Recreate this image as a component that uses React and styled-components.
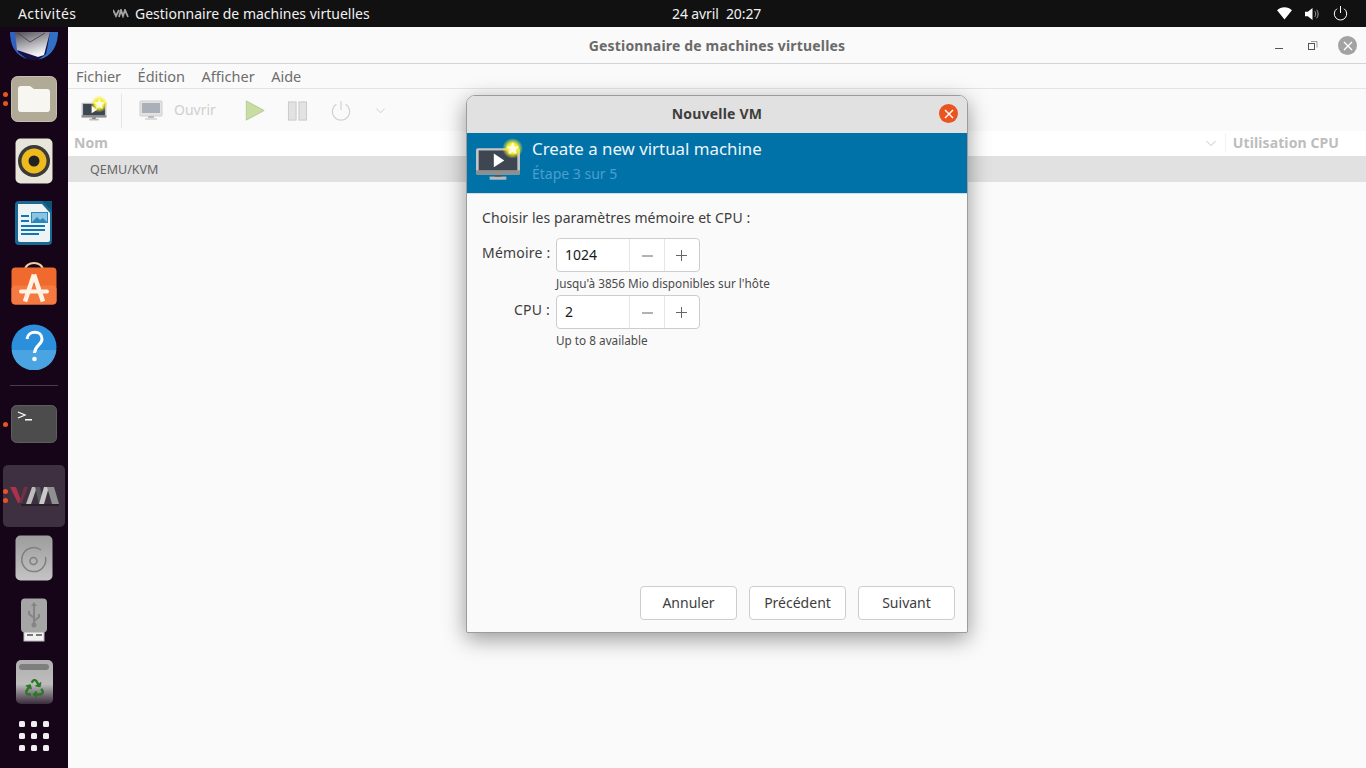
import React from "react";
import styled, { createGlobalStyle } from "styled-components";
import { FaRecycle } from "react-icons/fa";

const Global = createGlobalStyle`
  html, body { margin: 0; padding: 0; height: 100%; overflow: hidden; }
  body { font-family: "Noto Sans", "Open Sans", sans-serif; background: #fafafa; }
  * { box-sizing: border-box; }
`;

function VmStar({ size = 44, id, cx = 36, cy = 8, scale = 1.1 }) {
  return (
    <svg width={size} height={size} viewBox="0 0 44 44" style={{ overflow: "visible" }}>
      <defs>
        <radialGradient id={id}>
          <stop offset="0.5" stopColor="#f4ee2e" />
          <stop offset="1" stopColor="#f4ee2e" stopOpacity="0" />
        </radialGradient>
      </defs>
      <rect x="14" y="35" width="16" height="3" fill="#b9b9b9" />
      <rect x="19" y="32" width="6" height="3" fill="#555" />
      <rect x="1" y="8" width="42" height="25" rx="1.5" fill="#c6c6c6" />
      <rect x="1" y="29" width="42" height="4" fill="#8f8f8f" />
      <rect x="3.5" y="10" width="37" height="19" fill="#3e4652" />
      <path d="M18 13 L28 19.5 L18 26 Z" fill="#fff" />
      <g transform={`translate(${cx} ${cy}) scale(${scale}) translate(-36 -8)`}>
        <circle cx="36" cy="8" r="9" fill={`url(#${id})`} />
        <path d="M36 2.500l1.700 3.600 3.900.5-2.900 2.700.8 3.900-3.500-2-3.500 2 .8-3.900-2.900-2.700 3.900-.5z" fill="#fffbe0" />
      </g>
    </svg>
  );
}

function Monitor() {
  return (
    <svg width="24" height="22" viewBox="0 0 24 22">
      <rect x="1" y="1" width="22" height="15" rx="1" fill="#e2e2e2" stroke="#cfcfcf" />
      <rect x="3" y="3" width="18" height="10" fill="#a9b0b8" />
      <rect x="9" y="16" width="6" height="2" fill="#bdbdbd" />
      <rect x="6" y="18" width="12" height="2" fill="#dcdcdc" />
    </svg>
  );
}

function Chevron({ color = "#c9c9c9", size = 12 }) {
  return (
    <svg width={size} height={size} viewBox="0 0 12 12" fill="none">
      <path d="M1.500 4l4.500 4.500L10.500 4" stroke={color} strokeWidth="1" />
    </svg>
  );
}

function MailIcon() {
  return (
    <svg width="48" height="48" viewBox="0 0 48 48">
      <defs>
        <clipPath id="mailClip">
          <path d="M0 19h48v4A24 24 0 0 1 0 23z" />
        </clipPath>
        <linearGradient id="envFill" x1="0" y1="0" x2="0.4" y2="1">
          <stop offset="0" stopColor="#4f4b55" />
          <stop offset="0.6" stopColor="#b5b3ba" />
          <stop offset="1" stopColor="#f5f5f7" />
        </linearGradient>
      </defs>
      <g clipPath="url(#mailClip)">
        <rect x="0" y="19" width="48" height="29" fill="#181244" />
        <path d="M0 19h6l2 20 10 8C8 46 0 34 0 19z" fill="#2f62c0" />
        <path d="M40 19h8c0 14-8 27-20 28l8-6 2-10z" fill="#3270c6" />
        <path d="M5 19h35l-6 23-6 2-21-7z" fill="url(#envFill)" />
        <path d="M8 20l12 9 15-9" fill="none" stroke="#3f3c44" strokeWidth="0.800" />
      </g>
    </svg>
  );
}

function FilesIcon() {
  return (
    <svg width="46" height="46" viewBox="0 0 46 46">
      <rect x="0.500" y="0.500" width="45" height="45" rx="6" fill="#b0aa97" stroke="#c4bfaf" />
      <path d="M7 13a3 3 0 0 1 3-3h9l4 3h13a3 3 0 0 1 3 3v17a3 3 0 0 1-3 3H10a3 3 0 0 1-3-3z" fill="#f8f6f1" />
    </svg>
  );
}

function RhythmIcon() {
  return (
    <svg width="38" height="46" viewBox="0 0 38 46">
      <rect x="0.500" y="0.500" width="37" height="45" rx="5" fill="#e8e5da" />
      <circle cx="19" cy="23" r="16" fill="#3a3a3a" />
      <circle cx="19" cy="23" r="12.500" fill="#edbb1e" />
      <circle cx="19" cy="23" r="5.500" fill="#222" />
    </svg>
  );
}

function WriterIcon() {
  return (
    <svg width="38" height="46" viewBox="0 0 38 46">
      <path d="M4 1h24l9 9v31a4 4 0 0 1-4 4H4a4 4 0 0 1-4-4V5a4 4 0 0 1 4-4z" fill="#186a94" />
      <path d="M3 4h24l8 9v27a2 2 0 0 1-2 2H5a2 2 0 0 1-2-2z" fill="#eef3f6" />
      <path d="M27 1l10 10V1z" fill="#0d5579" />
      <g fill="#0f78b4">
        <rect x="6" y="15" width="8" height="2" />
        <rect x="6" y="20" width="8" height="2" />
        <rect x="6" y="25" width="24" height="2" />
        <rect x="6" y="29" width="24" height="2" />
        <rect x="6" y="33" width="18" height="2" />
      </g>
      <rect x="16.500" y="12.500" width="16" height="10" fill="#8ec3e0" stroke="#2a88bd" />
      <path d="M17 22l5-5 3 3 3-2 4 4z" fill="#2a88bd" />
    </svg>
  );
}

function SoftwareIcon() {
  return (
    <svg width="46" height="44" viewBox="0 1.500 46 44" style={{ overflow: "visible" }}>
      <path d="M14 9c0-10 18-10 18 0" fill="none" stroke="#f0cfa0" strokeWidth="2" />
      <rect x="0.500" y="6" width="45" height="37" rx="4" fill="#f0692d" />
      <rect x="0.500" y="24" width="45" height="19" rx="4" fill="#f47a42" />
      <path d="M23 13L14 40M23 13l9 27" stroke="#fff3e6" strokeWidth="4.500" fill="none" />
      <rect x="8" y="28" width="30" height="4" rx="2" fill="#fff3e6" />
    </svg>
  );
}

function HelpIcon() {
  return (
    <svg width="46" height="46" viewBox="0 0 46 46">
      <circle cx="23" cy="23" r="22.500" fill="#2b8fdb" />
      <path d="M.6 26h44.800A22.500 22.500 0 0 1 .6 26z" fill="#4ba4e2" />
      <path d="M16 15c1-9 15-9 15 0 0 6-7 6-7.500 14" fill="none" stroke="#fff" strokeWidth="3" />
      <circle cx="23.500" cy="35" r="2.300" fill="#fff" />
    </svg>
  );
}

function TerminalIcon() {
  return (
    <svg width="46" height="38" viewBox="0 0 46 38">
      <rect x="0.500" y="0.500" width="45" height="37" rx="5" fill="#4c4c4c" stroke="#5e5e5e" />
      <path d="M7 7l7 3-7 3" fill="none" stroke="#fff" strokeWidth="1.300" />
      <rect x="14" y="14" width="7" height="1.500" fill="#fff" />
    </svg>
  );
}

function VmmDockLogo() {
  return (
    <svg width="50" height="20" viewBox="0 0 50 20">
      <path d="M12 19h38" stroke="#1e1e1e" strokeWidth="1.600" />
      <path d="M1 1h6l6 16H9z" fill="#a8334d" />
      <path d="M15 1h4l-6 16h-3z" fill="#6d3345" />
      <path d="M17 18h5l6-17h-5z" fill="#bcbcbc" />
      <path d="M26 1h5l4 17h-5z" fill="#55585c" />
      <path d="M30 18h5l5-17h-5z" fill="#c9c9c9" />
      <path d="M38 1h7l5 17h-7z" fill="#8f9092" />
    </svg>
  );
}

function SmallVmm() {
  return (
    <svg width="16" height="9" viewBox="0 0 16 9" fill="none">
      <path d="M0 1l3 6 3-6M6 8l2-7 2 6 2-6 3 7" stroke="#a5a5a5" strokeWidth="1.800" />
    </svg>
  );
}

function DiscIcon() {
  return (
    <svg width="38" height="46" viewBox="0 0 38 46">
      <defs>
        <linearGradient id="discBg" x1="0" y1="0" x2="0" y2="1">
          <stop offset="0" stopColor="#9c9c9c" />
          <stop offset="1" stopColor="#c4c4c4" />
        </linearGradient>
      </defs>
      <rect x="0.500" y="0.500" width="37" height="45" rx="5" fill="url(#discBg)" />
      <path d="M26 15A12 12 0 1 0 30.500 22" fill="none" stroke="#7f7f7f" strokeWidth="1.500" />
      <circle cx="18.500" cy="26" r="3.500" fill="none" stroke="#7f7f7f" strokeWidth="1.500" />
    </svg>
  );
}

function UsbIcon() {
  return (
    <svg width="28" height="44" viewBox="0 0 28 44">
      <rect x="4" y="32" width="20" height="11" fill="#f1f1f1" stroke="#bbb" />
      <rect x="7" y="36" width="6" height="2" fill="#777" />
      <rect x="16" y="36" width="6" height="2" fill="#777" />
      <rect x="1" y="0.500" width="26" height="34" rx="4" fill="#a6a6a6" />
      <path d="M14 6v22M14 20l-5-4v-3M14 23l5-4v-3" fill="none" stroke="#858585" strokeWidth="2" />
      <path d="M14 4l-3 4h6z" fill="#858585" />
      <circle cx="14" cy="27" r="2.500" fill="#858585" />
    </svg>
  );
}

function TrashIcon() {
  return (
    <TrashBox>
      <TrashLid />
      <FaRecycle size={19} color="#2a7a22" />
    </TrashBox>
  );
}

function GridIcon() {
  return (
    <AppDots>
      {Array.from({ length: 9 }).map((_, i) => (
        <i key={i} />
      ))}
    </AppDots>
  );
}

const dockItems = [
  { id: "mail", icon: <MailIcon /> },
  { id: "files", icon: <FilesIcon />, dots: 2 },
  { id: "rhythm", icon: <RhythmIcon /> },
  { id: "writer", icon: <WriterIcon /> },
  { id: "software", icon: <SoftwareIcon /> },
  { id: "help", icon: <HelpIcon /> },
  { id: "sep" },
  { id: "term", icon: <TerminalIcon />, dots: 1 },
  { id: "vmm", icon: <VmmDockLogo />, dots: 2, active: true },
  { id: "disc", icon: <DiscIcon /> },
  { id: "usb", icon: <UsbIcon /> },
  { id: "trash", icon: <TrashIcon /> },
  { id: "grid", icon: <GridIcon /> },
];

function Spin({ value }) {
  return (
    <SpinBox>
      <SpinValue>{value}</SpinValue>
      <SpinBtn>
        <svg width="11" height="11" viewBox="0 0 11 11"><path d="M0 6h11" stroke="#666" /></svg>
      </SpinBtn>
      <SpinBtn>
        <svg width="11" height="11" viewBox="0 0 11 11"><path d="M0 5.500h11M5.500 0v11" stroke="#666" /></svg>
      </SpinBtn>
    </SpinBox>
  );
}

export default function App() {
  return (
    <Page>
      <Global />
      <TopBar>
        <TopLeft>
          <Activities>Activités</Activities>
          <AppName>
            <SmallVmm />
            <span>Gestionnaire de machines virtuelles</span>
          </AppName>
        </TopLeft>
        <Clock>24 avril&nbsp;&nbsp;20:27</Clock>
        <Tray>
          <svg width="15" height="13" viewBox="0 0 16 14"><path d="M0 3.500C4-.8 12-.8 16 3.500L8 13.500z" fill="#fff" /></svg>
          <svg width="15" height="14" viewBox="0 0 16 14" fill="none"><path d="M0 4.500h3L8 .5v13L3 9.500H0z" fill="#fff" /><path d="M10.500 4c1.200 1.800 1.200 4.200 0 6M12.500 2.500c2 2.600 2 6.400 0 9" stroke="#aaa" /></svg>
          <svg width="15" height="15" viewBox="0 0 15 15" fill="none"><path d="M4 2.700a6.200 6.200 0 1 0 7 0M7.500 0v7" stroke="#fff" /></svg>
        </Tray>
      </TopBar>
      <Body>
        <Dock>
          {dockItems.map((d) =>
            d.id === "sep" ? (
              <DockSep key={d.id} />
            ) : (
              <DockItem key={d.id} $active={d.active}>
                {d.dots ? (
                  <RunDots>
                    {Array.from({ length: d.dots }).map((_, i) => (
                      <b key={i} />
                    ))}
                  </RunDots>
                ) : null}
                {d.icon}
              </DockItem>
            )
          )}
        </Dock>
        <MainWindow>
          <TitleBar>
            <Title>Gestionnaire de machines virtuelles</Title>
            <WinBtns>
              <svg width="10" height="10" viewBox="0 0 10 10"><path d="M1 7.500h8" stroke="#555" /></svg>
              <svg width="10" height="10" viewBox="0 0 10 10" fill="none"><rect x="0.500" y="2.500" width="6" height="6" stroke="#555" /><path d="M3 .5h6v6" stroke="#999" /></svg>
              <GreyClose>
                <svg width="10" height="10" viewBox="0 0 10 10"><path d="M1 1l8 8M9 1L1 9" stroke="#fff" strokeWidth="1.300" /></svg>
              </GreyClose>
            </WinBtns>
          </TitleBar>
          <MenuBar>
            <MenuItem>Fichier</MenuItem>
            <MenuItem>Édition</MenuItem>
            <MenuItem>Afficher</MenuItem>
            <MenuItem>Aide</MenuItem>
          </MenuBar>
          <ToolBar>
            <NewVm><VmStar size={26} id="glowTool" cx={31} cy={10} scale={1.6} /></NewVm>
            <ToolSep />
            <OpenBtn>
              <Monitor />
              <span>Ouvrir</span>
            </OpenBtn>
            <svg width="22" height="23" viewBox="0 0 24 24"><path d="M2.500 1.500L22 12 2.500 22.500z" fill="#c8dca4" stroke="#b4c98d" /></svg>
            <svg width="21" height="22" viewBox="0 0 22 22"><rect x="1.500" y="1.500" width="8" height="19" fill="#e2e2e2" stroke="#c9c9c9" /><rect x="12.500" y="1.500" width="8" height="19" fill="#e2e2e2" stroke="#c9c9c9" /></svg>
            <ToolSlot $ml="2px">
              <svg width="20" height="22" viewBox="0 0 22 22" fill="none"><path d="M6 3.500a9.500 9.500 0 1 0 10 0M11 0v10" stroke="#d2d2d2" strokeWidth="1.300" /></svg>
            </ToolSlot>
            <ToolSlot $ml="3px"><Chevron size={11} /></ToolSlot>
          </ToolBar>
          <ListHead>
            <ColName>Nom</ColName>
            <Chevron color="#c4c4c4" />
            <ColCpu>Utilisation CPU</ColCpu>
          </ListHead>
          <ListRow>QEMU/KVM</ListRow>
        </MainWindow>
        <Dialog>
          <DialogTitle>
            <DialogName>Nouvelle VM</DialogName>
            <OrangeClose>
              <svg width="10" height="10" viewBox="0 0 10 10"><path d="M1 1l8 8M9 1L1 9" stroke="#fff" strokeWidth="1.400" /></svg>
            </OrangeClose>
          </DialogTitle>
          <Banner>
            <VmStar size={46} id="glowBanner" />
            <BannerText>
              <BannerHead>Create a new virtual machine</BannerHead>
              <BannerStep>Étape 3 sur 5</BannerStep>
            </BannerText>
          </Banner>
          <DialogBody>
            <Intro>Choisir les paramètres mémoire et CPU :</Intro>
            <Form>
              <FieldLabel>Mémoire :</FieldLabel>
              <FieldCell>
                <Spin value="1024" />
                <Hint>Jusqu'à 3856 Mio disponibles sur l'hôte</Hint>
              </FieldCell>
              <FieldLabel>CPU :</FieldLabel>
              <FieldCell>
                <Spin value="2" />
                <Hint>Up to 8 available</Hint>
              </FieldCell>
            </Form>
            <Actions>
              <ActionBtn>Annuler</ActionBtn>
              <ActionBtn>Précédent</ActionBtn>
              <ActionBtn>Suivant</ActionBtn>
            </Actions>
          </DialogBody>
        </Dialog>
      </Body>
    </Page>
  );
}

const Page = styled.div`
  width: 1366px;
  height: 768px;
  display: flex;
  flex-direction: column;
  overflow: hidden;
`;
const TopBar = styled.header`
  height: 27px;
  flex: none;
  background: #111;
  color: #f0f0f0;
  font-size: 14px;
  display: grid;
  grid-template-columns: 654px auto 1fr;
  align-items: center;
  padding-left: 18px;
`;
const TopLeft = styled.div`
  display: flex;
  align-items: center;
`;
const Activities = styled.span`
  width: 95px;
  letter-spacing: 0.4px;
`;
const AppName = styled.div`
  display: flex;
  align-items: center;
  gap: 6px;
`;
const Clock = styled.div`
  letter-spacing: -0.1px;
`;
const Tray = styled.div`
  justify-self: end;
  display: flex;
  align-items: center;
  gap: 13px;
  margin-right: 18px;
`;
const Body = styled.div`
  flex: 1;
  display: flex;
  position: relative;
  min-height: 0;
`;
const Dock = styled.nav`
  width: 68px;
  flex: none;
  background: #160518;
  display: flex;
  flex-direction: column;
  overflow: hidden;
`;
const DockItem = styled.div`
  position: relative;
  flex: none;
  height: 62px;
  width: 62px;
  margin-left: 3px;
  display: flex;
  align-items: center;
  justify-content: center;
  border-radius: 5px;
  background: ${(p) => (p.$active ? "#3e2f41" : "transparent")};
  margin-top: ${(p) => (p.$active ? "10px" : "0")};
  &:first-child { margin-top: -21px; }
`;
const RunDots = styled.div`
  position: absolute;
  left: 0;
  top: 0;
  bottom: 0;
  display: flex;
  flex-direction: column;
  justify-content: center;
  gap: 4px;
  b {
    display: block;
    width: 5px;
    height: 5px;
    border-radius: 50%;
    background: #e95420;
  }
`;
const DockSep = styled.div`
  flex: none;
  height: 1px;
  width: 48px;
  margin: 7px 0 7px 10px;
  background: #4b3d4d;
`;
const TrashBox = styled.div`
  width: 37px;
  height: 44px;
  border-radius: 5px;
  background: linear-gradient(#b0b0b0, #bdbdbd 55%, #3a2c3c);
  padding: 4px 3px 0;
  display: flex;
  flex-direction: column;
  align-items: center;
  gap: 9px;
`;
const TrashLid = styled.div`
  width: 30px;
  height: 6px;
  border-radius: 3px;
  background: #7e7e7e;
`;
const AppDots = styled.div`
  display: grid;
  grid-template-columns: repeat(3, 6px);
  gap: 6px;
  margin-bottom: 16px;
  i {
    width: 6px;
    height: 6px;
    border-radius: 1.500px;
    background: #f0eef0;
  }
`;
const MainWindow = styled.main`
  flex: 1;
  background: #fafafa;
  color: #6a6a6a;
  display: flex;
  flex-direction: column;
`;
const TitleBar = styled.div`
  height: 37px;
  flex: none;
  position: relative;
  display: flex;
  align-items: center;
  justify-content: center;
  border-bottom: 1px solid #d4d4d4;
`;
const Title = styled.div`
  font-size: 14px;
  font-weight: 700;
  letter-spacing: 0.17px;
  color: #6a6a6a;
`;
const WinBtns = styled.div`
  position: absolute;
  right: 9px;
  top: 9px;
  display: flex;
  align-items: center;
  gap: 24px;
`;
const GreyClose = styled.span`
  width: 19px;
  height: 19px;
  margin-left: -4px;
  border-radius: 50%;
  background: #a3a3a3;
  display: flex;
  align-items: center;
  justify-content: center;
`;
const MenuBar = styled.div`
  height: 25px;
  flex: none;
  display: flex;
  align-items: center;
  gap: 16.500px;
  padding-left: 8px;
  font-size: 14.500px;
  border-bottom: 1px solid #e4e4e4;
`;
const MenuItem = styled.span`
  color: #6e6e6e;
`;
const ToolBar = styled.div`
  height: 42px;
  flex: none;
  display: flex;
  align-items: center;
  padding: 1px 0 0 13px;
  gap: 21px;
`;
const NewVm = styled.div`
  display: flex;
  width: 26px;
`;
const ToolSep = styled.div`
  width: 1px;
  height: 34px;
  background: #e4e4e4;
  margin: 0 -4px 0 -7px;
`;
const OpenBtn = styled.div`
  display: flex;
  align-items: center;
  gap: 11px;
  font-size: 14px;
  color: #cfcfcf;
  margin-right: 7px;
  span { margin-top: -2px; }
`;
const ToolSlot = styled.div`
  display: flex;
  margin-left: ${(p) => p.$ml};
`;
const ListHead = styled.div`
  height: 25px;
  flex: none;
  background: #fff;
  display: flex;
  align-items: center;
  padding: 0 27px 2px 6px;
  font-size: 14px;
  font-weight: 700;
  color: #bdbdbd;
`;
const ColName = styled.span`
  flex: 1;
`;
const ColCpu = styled.span`
  margin-left: 8px;
  padding-left: 7px;
  letter-spacing: 0.1px;
  border-left: 1px solid #f2f2f2;
`;
const ListRow = styled.div`
  height: 26px;
  flex: none;
  background: #e1e1e1;
  display: flex;
  align-items: center;
  padding-left: 22px;
  font-size: 12.500px;
  color: #666;
`;
const Dialog = styled.section`
  position: absolute;
  left: 466px;
  top: 68px;
  width: 502px;
  height: 538px;
  background: #fafafa;
  border: 1px solid #9c9c9c;
  border-radius: 9px 9px 2px 2px;
  box-shadow: 0 6px 22px rgba(0, 0, 0, 0.4);
  display: flex;
  flex-direction: column;
  overflow: hidden;
`;
const DialogTitle = styled.div`
  height: 37px;
  flex: none;
  background: #e1e1e1;
  display: flex;
  align-items: center;
  justify-content: center;
  position: relative;
  padding-bottom: 2px;
`;
const DialogName = styled.div`
  font-size: 14px;
  font-weight: 700;
  letter-spacing: 0.2px;
  color: #3d3d3d;
`;
const OrangeClose = styled.span`
  position: absolute;
  right: 9px;
  top: 8px;
  width: 19px;
  height: 19px;
  border-radius: 50%;
  background: #e95420;
  display: flex;
  align-items: center;
  justify-content: center;
`;
const Banner = styled.div`
  height: 61px;
  flex: none;
  background: #0072a8;
  border-bottom: 1px solid #cfdde5;
  display: flex;
  align-items: center;
  gap: 11px;
  padding-left: 8px;
`;
const BannerText = styled.div`
  display: flex;
  flex-direction: column;
  margin-top: -6px;
`;
const BannerHead = styled.div`
  font-size: 16.850px;
  line-height: 24px;
  margin-bottom: 3px;
  color: #eef6fa;
`;
const BannerStep = styled.div`
  font-size: 14px;
  line-height: 20px;
  color: #4a9fd0;
`;
const DialogBody = styled.div`
  flex: 1;
  display: flex;
  flex-direction: column;
  padding: 14px 12px 12px 15px;
  color: #3d3d3d;
`;
const Intro = styled.div`
  font-size: 14px;
  line-height: 19px;
  letter-spacing: 0.07px;
`;
const Form = styled.div`
  display: grid;
  grid-template-columns: 68px auto;
  column-gap: 6px;
  margin-top: 11px;
  flex: 1;
  align-content: start;
`;
const FieldLabel = styled.div`
  font-size: 14px;
  line-height: 30px;
  letter-spacing: 0.2px;
  text-align: right;
  white-space: nowrap;
`;
const FieldCell = styled.div`
  display: flex;
  flex-direction: column;
`;
const SpinBox = styled.div`
  width: 144px;
  height: 34px;
  display: flex;
  background: #fff;
  border: 1px solid #cdcdcd;
  border-radius: 4px;
`;
const SpinValue = styled.div`
  flex: 1;
  font-size: 14px;
  color: #1a1a1a;
  line-height: 32px;
  padding-left: 8px;
`;
const SpinBtn = styled.div`
  width: 35px;
  border-left: 1px solid #e6e6e6;
  display: flex;
  align-items: center;
  justify-content: center;
  &:last-child { padding-right: 2px; }
`;
const Hint = styled.div`
  font-size: 11.750px;
  line-height: 23px;
  color: #4a4a4a;
`;
const Actions = styled.div`
  display: flex;
  justify-content: flex-end;
  gap: 12px;
`;
const ActionBtn = styled.button`
  width: 97px;
  height: 34px;
  font-family: inherit;
  font-size: 14px;
  color: #3d3d3d;
  background: #fff;
  border: 1px solid #cdcdcd;
  border-radius: 4px;
  padding: 0 0 2px;
`;
